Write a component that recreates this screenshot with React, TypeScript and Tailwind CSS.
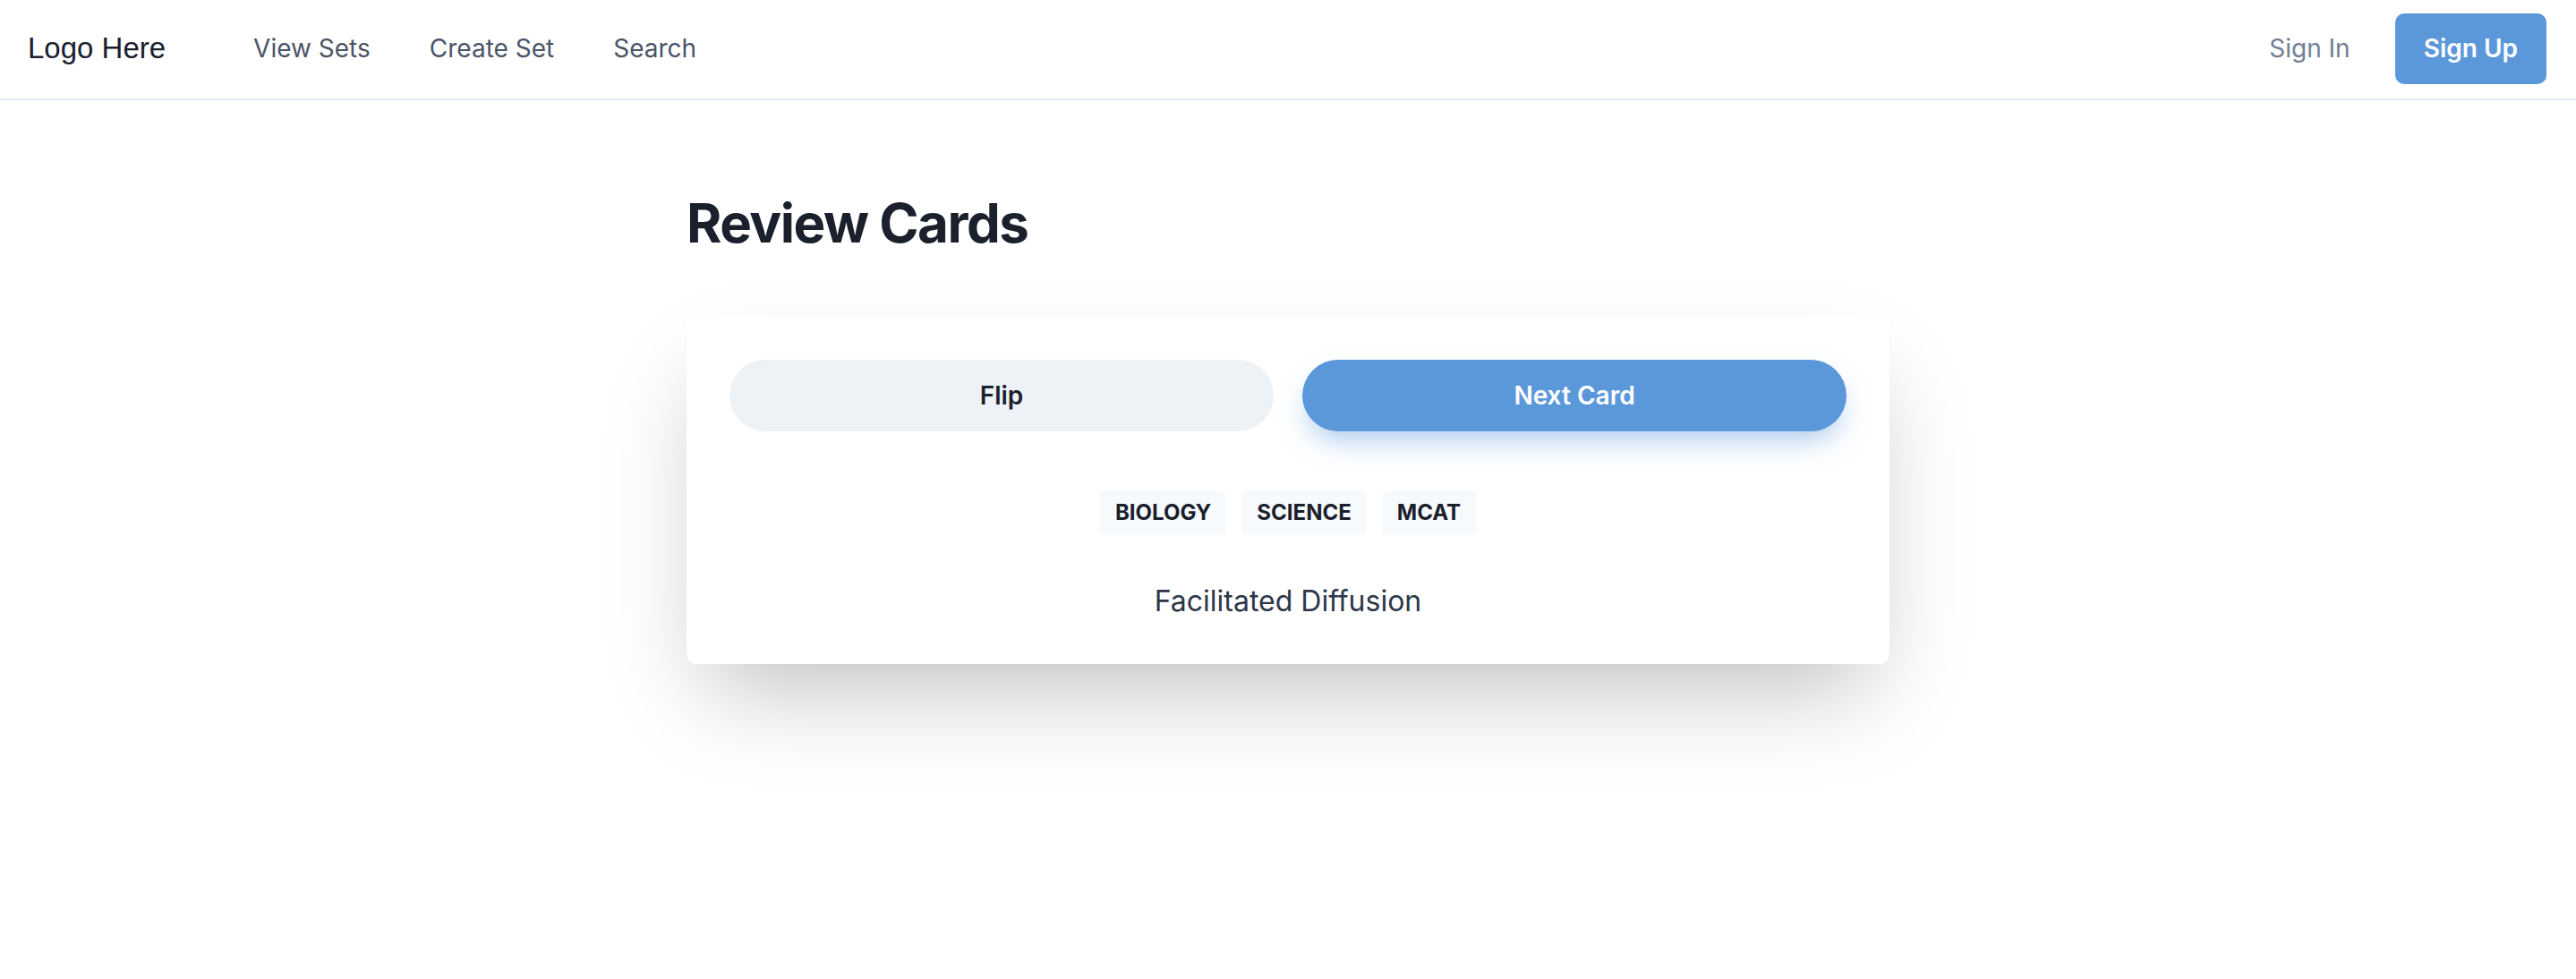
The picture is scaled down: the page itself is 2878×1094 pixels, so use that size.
import React from "react";

export default function App() {
  const inter = { fontFamily: "Inter, 'Noto Sans', sans-serif" } as React.CSSProperties;
  return (
    <div className="min-h-[1094px] w-full bg-white" style={inter}>
      <header className="box-border flex h-[112px] items-center justify-between border-b-2 border-[#e2e8f0] pb-[2px] pl-[31px] pr-[33px]">
        <div className="flex items-center">
          <span
            className="text-[33px] leading-[48px] text-[#1a202c]"
            style={{ fontFamily: "'Liberation Sans', Arial, sans-serif" }}
          >
            Logo Here
          </span>
          <nav className="ml-[98px] flex items-center gap-[66px] text-[28px] leading-[44px] text-[#4a5568]">
            <a>View Sets</a>
            <a>Create Set</a>
            <a>Search</a>
          </nav>
        </div>
        <div className="flex items-center gap-[50px]">
          <a className="text-[28px] leading-[44px] text-[#718096]">Sign In</a>
          <button className="h-[79px] rounded-[10px] bg-[#5b98da] px-[32px] text-[28px] font-semibold leading-[44px] text-white">
            Sign Up
          </button>
        </div>
      </header>

      <main className="mx-auto w-[1344px] pt-[101px]">
        <h1 className="text-[60px] font-bold leading-[72px] tracking-[-1.5px] text-[#1a202c]">Review Cards</h1>

        <div className="mt-[69px] rounded-[12px] bg-white px-[48px] pb-[46px] pt-[48px] shadow-[0_50px_100px_-24px_rgba(0,0,0,0.25)]">
          <div className="grid grid-cols-2 gap-[32px]">
            <button className="h-[80px] rounded-full bg-[#edf2f7] text-[28px] font-semibold text-[#1a202c]">
              Flip
            </button>
            <button className="h-[80px] rounded-full bg-[#5b98da] text-[28px] font-semibold text-white shadow-[0_16px_32px_-8px_rgba(91,152,218,0.55)]">
              Next Card
            </button>
          </div>

          <div className="mt-[66px] flex justify-center gap-[17px]">
            {["BIOLOGY", "SCIENCE", "MCAT"].map((t) => (
              <span
                key={t}
                className="rounded-[6px] bg-[#f7fafc] px-[17px] py-[9px] text-[24px] font-bold leading-[32px] text-[#1a202c]"
              >
                {t}
              </span>
            ))}
          </div>

          <p className="mt-[50px] text-center text-[32px] leading-[48px] text-[#2d3748]">
            Facilitated Diffusion
          </p>
        </div>
      </main>
    </div>
  );
}
